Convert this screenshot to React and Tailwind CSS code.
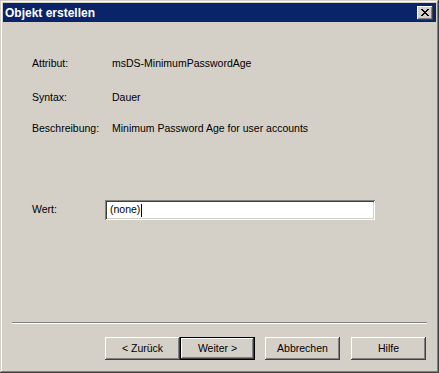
import React from 'react';

const raised =
  'shadow-[inset_-1px_-1px_#404040,inset_1px_1px_#ffffff,inset_-2px_-2px_#808080,inset_2px_2px_#d4d0c8]';

function Button({ children, isDefault }) {
  return (
    <button
      className={
        isDefault
          ? 'w-[75px] h-[23px] bg-[#d4d0c8] border border-black shadow-[inset_-1px_-1px_#404040,inset_1px_1px_#ffffff,inset_-2px_-2px_#808080] text-[10.5px] text-black'
          : 'w-[75px] h-[23px] bg-[#d4d0c8] ' + raised + ' text-[10.5px] text-black'
      }
    >
      {children}
    </button>
  );
}

export default function App() {
  return (
    <div
      className="w-[439px] h-[373px] bg-[#d4d0c8] p-[3px] flex flex-col shadow-[inset_-1px_-1px_#404040,inset_1px_1px_#d4d0c8,inset_-2px_-2px_#808080,inset_2px_2px_#ffffff]"
      style={{ fontFamily: '"Liberation Sans", Arial, sans-serif' }}
    >
      {/* Title bar */}
      <div className="h-[19px] bg-[#0a246a] flex items-center justify-between pl-[2px] pr-[3px]">
        <span className="text-white font-bold text-[12px] leading-none">Objekt erstellen</span>
        <button className={'w-[16px] h-[14px] bg-[#d4d0c8] flex items-center justify-center ' + raised}>
          <svg width="8" height="7" viewBox="0 0 8 7" shapeRendering="crispEdges">
            <path d="M0 0h2v1H0zM6 0h2v1H6zM1 1h2v1H1zM5 1h2v1H5zM2 2h4v1H2zM3 3h2v1H3zM2 4h4v1H2zM1 5h2v1H1zM5 5h2v1H5zM0 6h2v1H0zM6 6h2v1H6z" fill="#000" />
          </svg>
        </button>
      </div>

      {/* Body */}
      <div className="flex-1 flex flex-col text-[10.5px] text-black">
        <div className="grid grid-cols-[80px_1fr] pl-[29px] pt-[35px] leading-[13px]">
          <span>Attribut:</span>
          <span>msDS-MinimumPasswordAge</span>
          <span className="mt-[21px]">Syntax:</span>
          <span className="mt-[21px]">Dauer</span>
          <span className="mt-[18px]">Beschreibung:</span>
          <span className="mt-[18px]">Minimum Password Age for user accounts</span>
        </div>

        <div className="flex items-center pl-[29px] mt-[65px]">
          <span className="w-[73px]">Wert:</span>
          <div className="w-[270px] h-[20px] bg-white flex items-center pl-[5px] shadow-[inset_1px_1px_#808080,inset_-1px_-1px_#ffffff,inset_2px_2px_#404040,inset_-2px_-2px_#d4d0c8]">
            <span>(none)</span>
            <span className="ml-px w-px h-[13px] bg-black" />
          </div>
        </div>

        <div className="mt-auto mx-[9px] h-[2px] border-t border-[#808080] border-b border-b-white" />

        <div className="flex justify-end pr-[10px] pt-[13px] pb-[10px]">
          <Button>&lt; Zurück</Button>
          <Button isDefault>Weiter &gt;</Button>
          <div className="w-[10px]" />
          <Button>Abbrechen</Button>
          <div className="w-[11px]" />
          <Button>Hilfe</Button>
        </div>
      </div>
    </div>
  );
}
